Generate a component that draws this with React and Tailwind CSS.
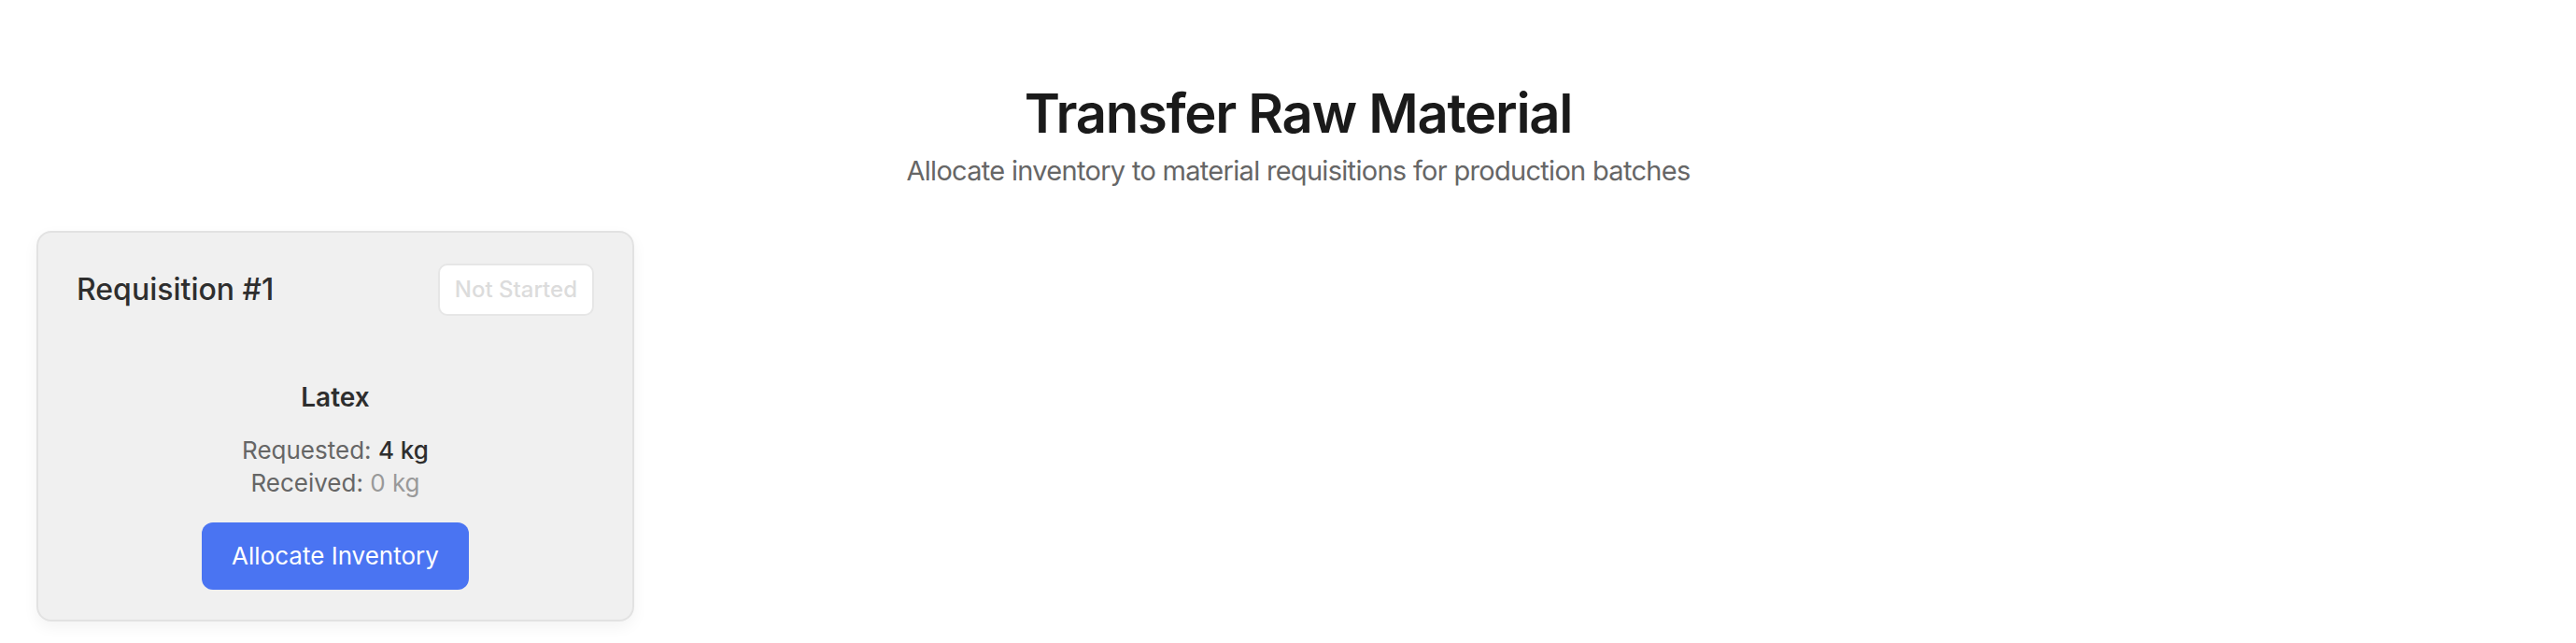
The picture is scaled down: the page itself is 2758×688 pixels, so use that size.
export default function App() {
  return (
    <div className="min-h-screen bg-white font-['Inter',sans-serif] pl-[39px] pr-[17px] pt-[85px]">
      <header className="text-center">
        <h1 className="text-[58px] leading-[72px] font-semibold tracking-[-1.3px] text-[#1a1a1a]">
          Transfer Raw Material
        </h1>
        <p className="mt-[4px] text-[29px] leading-[44px] tracking-[-0.7px] text-[#666666]">
          Allocate inventory to material requisitions for production batches
        </p>
      </header>

      <div className="mt-[42px] flex">
        <div className="w-[640px] rounded-[16px] border-2 border-[#e2e2e2] bg-[#f0f0f0] px-[41px] pt-[33px] pb-[32px] shadow-[0_6px_16px_rgba(0,0,0,0.05)]">
          <div className="flex items-center justify-between">
            <h2 className="text-[32px] leading-[44px] font-medium text-[#2e2e2e]">Requisition #1</h2>
            <span className="rounded-[10px] border-2 border-[#e6e6e6] bg-white px-[16px] py-[10px] text-[24px] leading-[32px] font-medium text-[#dcdcdc]">
              Not Started
            </span>
          </div>

          <div className="mt-[67px] flex flex-col items-center text-center">
            <div className="text-[28px] leading-[40px] font-semibold text-[#2e2e2e]">Latex</div>
            <div className="mt-[19px] text-[26px] leading-[35px] text-[#666666]">
              <p>
                Requested: <span className="font-medium text-[#2e2e2e]">4 kg</span>
              </p>
              <p>
                Received: <span className="text-[#999999]">0 kg</span>
              </p>
            </div>
            <button className="mt-[25px] h-[72px] rounded-[12px] bg-[#4a74f2] px-[32px] text-[26px] leading-[40px] text-white">
              Allocate Inventory
            </button>
          </div>
        </div>
      </div>
    </div>
  );
}
